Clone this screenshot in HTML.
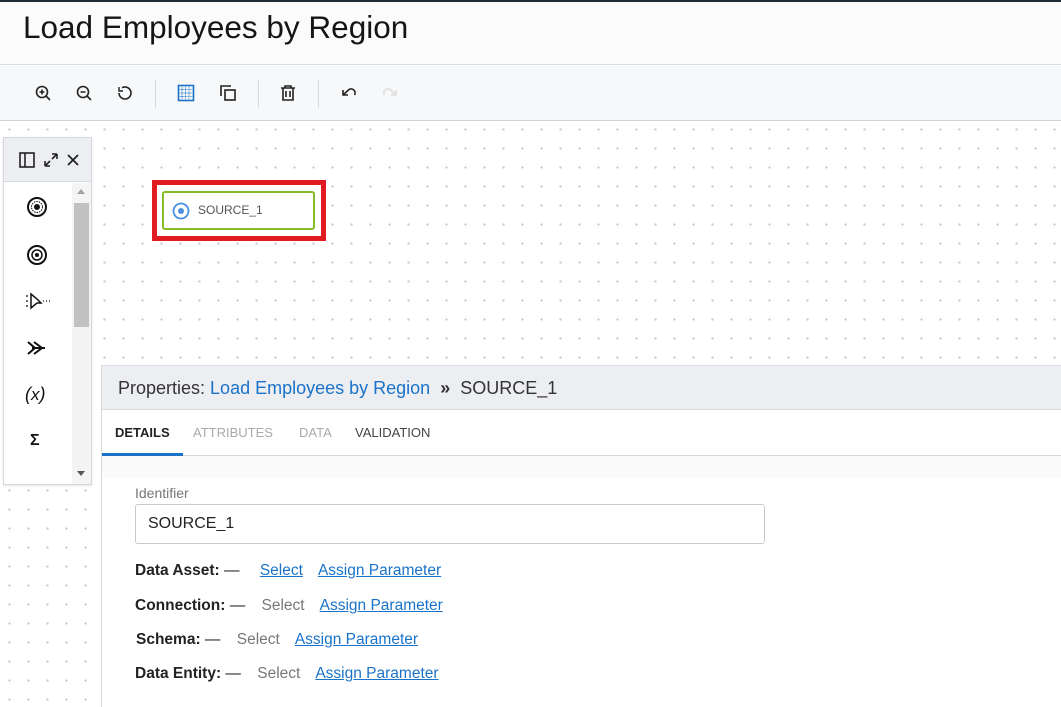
<!DOCTYPE html>
<html><head><meta charset="utf-8"><style>
*{margin:0;padding:0;box-sizing:border-box}
body{width:1061px;height:707px;overflow:hidden;font-family:"Liberation Sans",Arial,sans-serif;background:#fff;position:relative}
.topline{position:absolute;left:0;top:0;width:1061px;height:2px;background:#1f2a36}
.title{position:absolute;left:0;top:2px;width:1061px;height:63px;background:#fbfbfc;border-bottom:1px solid #d7dadf}
.title h1{position:absolute;left:23px;top:7px;font-weight:normal;font-size:31.5px;color:#161513}
.toolbar{position:absolute;left:0;top:66px;width:1061px;height:55px;background:#f7f8f9;border-bottom:1px solid #cfd2d6}
.toolbar svg{position:absolute;top:18px}
.sep{position:absolute;top:14px;width:1px;height:28px;background:#d5dae0}
.canvas{position:absolute;left:0;top:121px;width:1061px;height:586px;background-image:radial-gradient(circle,#c4c4c4 1px,transparent 1.3px);background-size:19px 19px;background-position:0px -1px}
.pal{position:absolute;left:3px;top:137px;width:89px;height:348px;background:#fff;border:1px solid #d5d8dc;box-shadow:0 1px 2px rgba(0,0,0,.1)}
.palhead{height:44px;background:#eceef1;border-bottom:1px solid #d5d8dc;position:relative}
.scroll{position:absolute;left:68px;top:45px;width:19px;height:301px;background:#f4f4f4}
.thumb{position:absolute;left:2px;top:20px;width:15px;height:124px;background:#c1c1c1}
.node{position:absolute;left:152px;top:180px;width:174px;height:61px;border:5px solid #e21b23;background:#fff}
.node .in{position:absolute;left:5px;top:6px;width:153px;height:39px;border:2px solid #86bc25;border-radius:3px}
.node span{position:absolute;left:34px;top:10px;font-size:12px;color:#555}
.props{position:absolute;left:101px;top:365px;width:960px;height:342px;background:#fff;border-left:1px solid #d9d9d9}
.phead{height:45px;background:#eceef1;border-bottom:1px solid #d5d8dc;border-top:1px solid #dcdfe3;font-size:18px;color:#333;padding:12px 0 0 16px}
.phead a{color:#1a73c9;text-decoration:none}
.tabs{height:46px;border-bottom:1px solid #d5d8dc;position:relative;font-size:14px}
.tabs span{position:absolute;top:15px}
.band{height:22px;background:#fafafa}
.lbl{position:absolute;left:33px;top:120px;font-size:14px;color:#777}
.inp{position:absolute;left:33px;top:139px;width:630px;height:40px;border:1px solid #c9c9c9;border-radius:3px;font-size:16px;color:#222;padding:10px 0 0 12px}
.row{position:absolute;font-size:15.5px;color:#222;white-space:nowrap}
.row b{font-weight:bold}
.row .s{color:#777;margin-left:12px}
.row a{color:#1a73c9;text-decoration:underline;margin-left:12px}
</style></head><body>
<div class="topline"></div>
<div class="title"><h1>Load Employees by Region</h1></div>
<div class="toolbar">
<svg style="left:34px" width="18" height="18" viewBox="0 0 18 18" fill="none" stroke="#222" stroke-width="1.6"><circle cx="8" cy="8" r="5.5"/><path d="M12 12l4 4M5.5 8h5M8 5.5v5"/></svg>
<svg style="left:75px" width="18" height="18" viewBox="0 0 18 18" fill="none" stroke="#222" stroke-width="1.6"><circle cx="8" cy="8" r="5.5"/><path d="M12 12l4 4M5.5 8h5"/></svg>
<svg style="left:116px" width="18" height="18" viewBox="0 0 18 18" fill="none" stroke="#222" stroke-width="1.6"><path d="M3 9a6 6 0 1 0 3-5.2" /><path d="M3 3v4h4" stroke-width="1.4"/></svg>
<div class="sep" style="left:155px"></div>
<svg style="left:177px" width="18" height="18" viewBox="0 0 18 18" fill="none" stroke="#1a73c9" stroke-width="1"><rect x="1.5" y="1.5" width="15" height="15" stroke-width="1.6"/><path d="M1.5 5.5h15M1.5 9h15M1.5 12.5h15M5 1.5v15M8.5 1.5v15M12 1.5v15" stroke-dasharray="1 1"/></svg>
<svg style="left:219px" width="18" height="18" viewBox="0 0 18 18" fill="none" stroke="#222" stroke-width="1.6"><path d="M2 12V2h10"/><rect x="6" y="6" width="10" height="10"/></svg>
<div class="sep" style="left:258px"></div>
<svg style="left:279px" width="18" height="18" viewBox="0 0 18 18" fill="none" stroke="#222" stroke-width="1.6"><path d="M2 4h14M6 4V2h6v2M4 4v12h10V4M7 7v6M11 7v6"/></svg>
<div class="sep" style="left:318px"></div>
<svg style="left:340px" width="18" height="18" viewBox="0 0 18 18" fill="none" stroke="#222" stroke-width="1.6"><path d="M3 6v5h5"/><path d="M3 11L9 5.5a4 4 0 015.5 5.5"/></svg>
<svg style="left:381px" width="18" height="18" viewBox="0 0 18 18" fill="none" stroke="#ddd" stroke-width="1.6"><path d="M15 6v5h-5"/><path d="M15 11L9 5.5a4 4 0 00-5.5 5.5"/></svg>
</div>
<div class="canvas"></div>
<div class="pal">
<div class="palhead">
<svg style="position:absolute;left:14px;top:13px" width="18" height="18" viewBox="0 0 18 18" fill="none" stroke="#222" stroke-width="1.6"><rect x="2" y="2" width="14" height="14"/><path d="M7 2v14"/></svg>
<svg style="position:absolute;left:38px;top:13px" width="18" height="18" viewBox="0 0 18 18" fill="none" stroke="#222" stroke-width="1.6"><path d="M3 15l5-5M3 15v-5M3 15h5M15 3l-5 5M15 3v5M15 3h-5"/></svg>
<svg style="position:absolute;left:61px;top:14px" width="16" height="16" viewBox="0 0 16 16" stroke="#222" stroke-width="1.8"><path d="M3 3l10 10M13 3L3 13"/></svg>
</div>
<div class="scroll"><div style="position:absolute;left:5px;top:6px;border:4px solid transparent;border-bottom:5px solid #a0a0a0;border-top:0"></div><div class="thumb"></div><div style="position:absolute;left:5px;bottom:8px;border:4px solid transparent;border-top:5px solid #555;border-bottom:0"></div></div>
<svg style="position:absolute;left:22px;top:58px" width="22" height="22" viewBox="0 0 22 22" fill="none" stroke="#111"><circle cx="11" cy="11" r="9" stroke-width="2"/><circle cx="11" cy="11" r="5.5" stroke-width="1" stroke-dasharray="1.5 1"/><circle cx="11" cy="11" r="2.5" fill="#111"/></svg>
<svg style="position:absolute;left:22px;top:106px" width="22" height="22" viewBox="0 0 22 22" fill="none" stroke="#111"><circle cx="11" cy="11" r="9" stroke-width="2"/><circle cx="11" cy="11" r="5" stroke-width="1.5"/><circle cx="11" cy="11" r="1.5" fill="#111"/></svg>
<svg style="position:absolute;left:21px;top:153px" width="26" height="20" viewBox="0 0 26 20" fill="none" stroke="#111" stroke-width="1.5"><path d="M6 3v14l6-5h4l-4-4z"/><path d="M1 5h2M1 10h2M1 15h2M18 10h1M21 10h1M24 10h1" stroke-width="1.2"/></svg>
<svg style="position:absolute;left:22px;top:200px" width="22" height="20" viewBox="0 0 22 20" fill="none" stroke="#111" stroke-width="2"><path d="M2 4l7 6-7 6M8 4l8 6-8 6M6 10h13"/></svg>
<div style="position:absolute;left:21px;top:246px;font-size:18px;font-style:italic;color:#111">(<i style="font-size:17px">x</i>)</div>
<div style="position:absolute;left:26px;top:294px;font-size:16px;font-weight:bold;color:#111">Σ</div>
</div>
<div class="node"><div class="in"><svg style="position:absolute;left:8px;top:9px" width="18" height="18" viewBox="0 0 18 18"><circle cx="9" cy="9" r="7.5" fill="none" stroke="#4a90e2" stroke-width="1.8"/><circle cx="9" cy="9" r="3" fill="#4a90e2"/></svg><span>SOURCE_1</span></div></div>
<div class="props">
<div class="phead">Properties: <a>Load Employees by Region</a> &nbsp;<b>»</b>&nbsp; SOURCE_1</div>
<div class="tabs">
<span style="left:13px;font-weight:bold;color:#222;font-size:13px">DETAILS</span>
<span style="left:91px;color:#aaa;font-size:13px">ATTRIBUTES</span>
<span style="left:197px;color:#aaa;font-size:13px">DATA</span>
<span style="left:253px;color:#444;font-size:13px">VALIDATION</span>
<div style="position:absolute;left:0;bottom:-1px;width:81px;height:3px;background:#1a73c9"></div>
</div>
<div class="band"></div>
<div class="lbl">Identifier</div>
<div class="inp">SOURCE_1</div>
<div class="row" style="left:33px;top:197px"><b>Data Asset:</b> — <a style="margin-left:16px">Select</a><a style="margin-left:15px">Assign Parameter</a></div>
<div class="row" style="left:33px;top:232px"><b>Connection:</b> — <span class="s" style="margin-left:12px">Select</span><a style="margin-left:15px">Assign Parameter</a></div>
<div class="row" style="left:34px;top:266px"><b>Schema:</b> — <span class="s">Select</span><a style="margin-left:15px">Assign Parameter</a></div>
<div class="row" style="left:33px;top:300px"><b>Data Entity:</b> — <span class="s">Select</span><a style="margin-left:15px">Assign Parameter</a></div>
</div>
</body></html>
